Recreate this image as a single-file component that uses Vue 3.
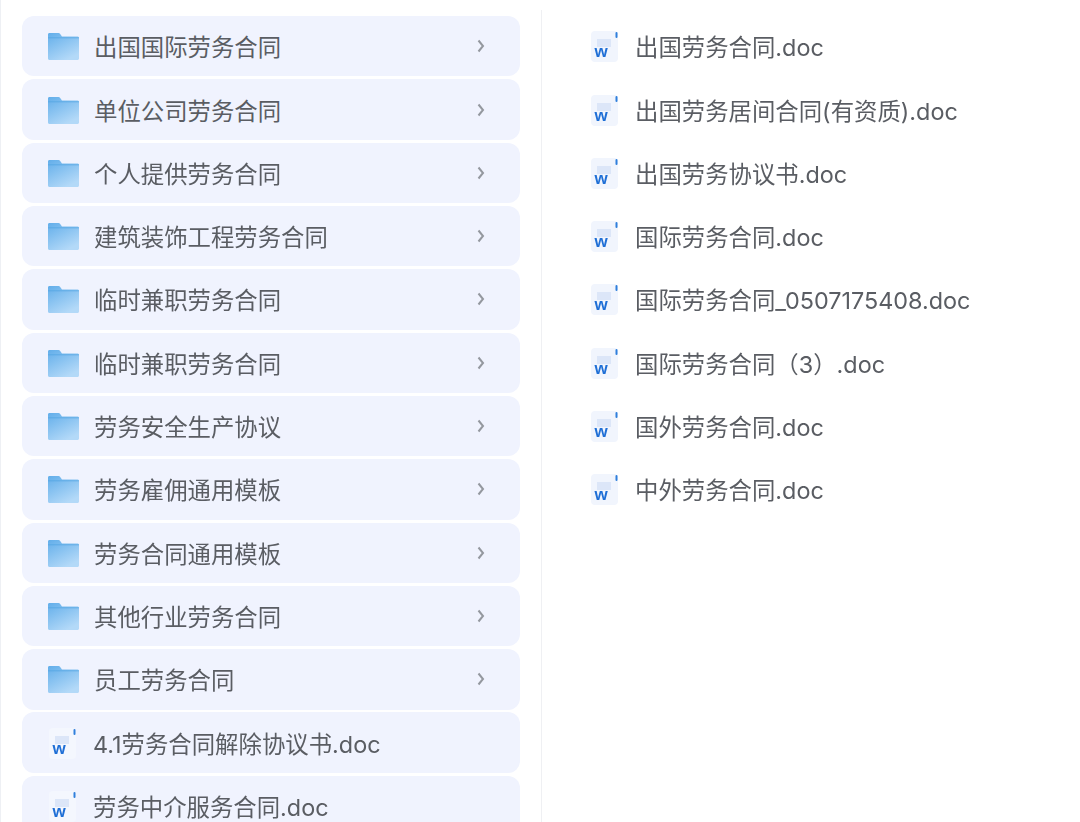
<script setup>
const folders = ['出国国际劳务合同','单位公司劳务合同','个人提供劳务合同','建筑装饰工程劳务合同','临时兼职劳务合同','临时兼职劳务合同','劳务安全生产协议','劳务雇佣通用模板','劳务合同通用模板','其他行业劳务合同','员工劳务合同']
const leftDocs = ['4.1劳务合同解除协议书.doc','劳务中介服务合同.doc']
const rightDocs = ['出国劳务合同.doc','出国劳务居间合同(有资质).doc','出国劳务协议书.doc','国际劳务合同.doc','国际劳务合同_0507175408.doc','国际劳务合同（3）.doc','国外劳务合同.doc','中外劳务合同.doc']
</script>

<template>
  <div class="page">
    <div class="left">
      <div v-for="(f, i) in folders" :key="'f' + i" class="row card">
        <svg class="folder" width="32" height="30" viewBox="0 0 32 30">
          <defs>
            <linearGradient :id="'fg' + i" x1="0" y1="0" x2="0.6" y2="1">
              <stop offset="0" stop-color="#62aeea" />
              <stop offset="1" stop-color="#b3d9f8" />
            </linearGradient>
          </defs>
          <path d="M1 3.500C1 2.700 1.600 2 2.400 2h9.200c.5 0 .9.2 1.200.6L15 5.500h15.500c.8 0 1.500.7 1.500 1.500v20.500c0 .8-.7 1.500-1.500 1.500H2.500C1.700 29 1 28.300 1 27.500Z" :fill="'url(#fg' + i + ')'" />
          <path d="M1 6h31v1.400H1Z" fill="#4fa3e2" opacity=".5" />
        </svg>
        <span class="label">{{ f }}</span>
        <svg class="chev" width="8" height="14" viewBox="0 0 8 14"><path d="M1.500 1.500 6 7l-4.500 5.500" fill="none" stroke="#94989f" stroke-width="2" /></svg>
      </div>
      <div v-for="(d, i) in leftDocs" :key="'l' + i" class="row card">
        <svg class="doc" width="30" height="34" viewBox="0 0 30 34">
          <rect x="2" y="2" width="27" height="31" rx="4" fill="#f4f7fe" />
          <rect x="8" y="10" width="14" height="8" fill="#dce6f8" />
          <rect x="26.500" y="3" width="2" height="6" rx="1" fill="#2f7fdc" />
          <text x="5.500" y="28" class="w">w</text>
        </svg>
        <span class="label">{{ d }}</span>
      </div>
    </div>
    <div class="right">
      <div v-for="(d, i) in rightDocs" :key="'r' + i" class="row plain">
        <svg class="doc" width="30" height="34" viewBox="0 0 30 34">
          <rect x="2" y="2" width="27" height="31" rx="4" fill="#f1f5fd" />
          <rect x="8" y="10" width="14" height="8" fill="#dce6f8" />
          <rect x="26.500" y="3" width="2" height="6" rx="1" fill="#2f7fdc" />
          <text x="5.500" y="28" class="w">w</text>
        </svg>
        <span class="label">{{ d }}</span>
      </div>
    </div>
  </div>
</template>

<style>
html, body { margin: 0; background: #fff; overflow: hidden; }
</style>

<style scoped>
.page {
  width: 1080px;
  height: 822px;
  overflow: hidden;
  display: flex;
  box-sizing: border-box;
  border-left: 1px solid #eef0f4;
  font-family: "Inter", "Noto Sans CJK SC", sans-serif;
  color: #5a5d63;
  filter: blur(0.6px);
}
.left {
  width: 498px;
  margin-left: 21px;
  padding-top: 16px;
  display: flex;
  flex-direction: column;
  gap: 2.930px;
  flex-shrink: 0;
}
.right {
  margin: 10px 0 0 21px;
  padding: 6px 0 0 47px;
  border-left: 1.5px solid #eff0f3;
  flex: 1;
  display: flex;
  flex-direction: column;
  gap: 2.930px;
}
.row {
  height: 60.400px;
  flex-shrink: 0;
  display: flex;
  align-items: center;
  font-size: 23.400px;
  white-space: nowrap;
}
.card {
  background: #f0f3fe;
  border-radius: 12px;
  padding-left: 25px;
  padding-right: 35px;
}
.folder { flex-shrink: 0; margin-right: 15px; }
.card .doc { margin: 0 16px 0 0; flex-shrink: 0; }
.plain .doc { margin-right: 16px; flex-shrink: 0; }
.label { flex: 1; }
.chev { flex-shrink: 0; }
.w {
  font-family: "Liberation Sans", sans-serif;
  font-size: 17px;
  font-weight: 700;
  fill: #1f6fd6;
}
</style>
